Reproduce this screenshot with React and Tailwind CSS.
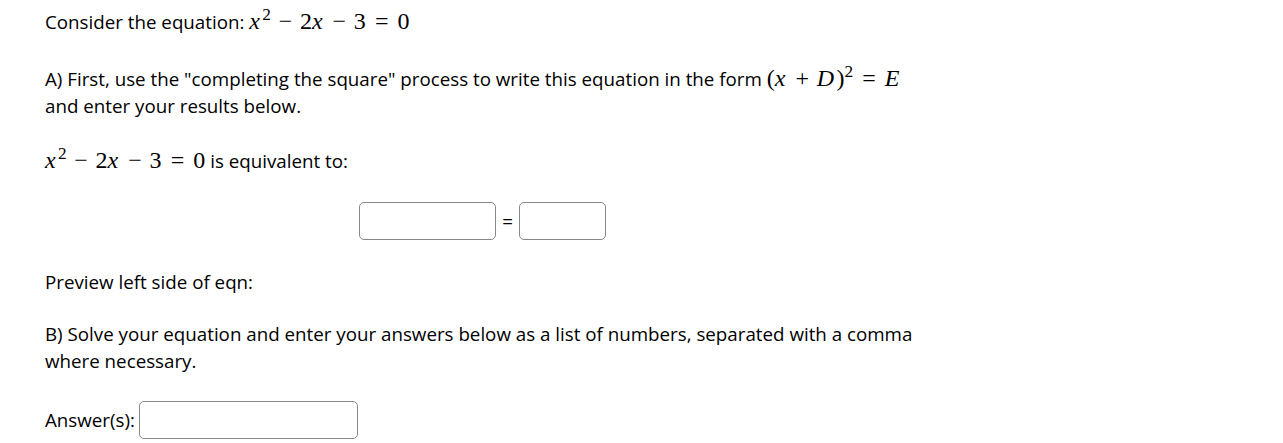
import React from "react";

function MI({ children, r = "0.1em" }) {
  return (
    <span className="italic" style={{ marginRight: r }}>
      {children}
    </span>
  );
}
function Bin({ children }) {
  return <span className="mx-[0.32em]">{children}</span>;
}
function Rel({ children }) {
  return <span className="mx-[0.38em]">{children}</span>;
}
function Sup({ children }) {
  return <span className="relative -top-[0.5em] text-[0.72em]">{children}</span>;
}

function Math({ children }) {
  return (
    <span className="whitespace-nowrap text-[24px] font-['Liberation_Serif',serif] leading-none">
      {children}
    </span>
  );
}

function Eqn() {
  return (
    <Math>
      <MI>x</MI>
      <Sup>2</Sup>
      <Bin>−</Bin>2<MI>x</MI>
      <Bin>−</Bin>3<Rel>=</Rel>0
    </Math>
  );
}

export default function App() {
  return (
    <div className="bg-white min-h-[443px] text-black font-['Open_Sans',sans-serif] text-[18.75px] leading-[27.5px]">
      <div className="pl-[45px] w-[920px] pt-[8px] flex flex-col">
        <p>
          Consider the equation: <Eqn />
        </p>
        <p className="mt-[29px]">
          A) First, use the "completing the square" process to write this equation in the form{" "}
          <Math>
            (<MI>x</MI>
            <Bin>+</Bin>
            <MI>D</MI>)<Sup>2</Sup>
            <Rel>=</Rel>
            <MI>E</MI>
          </Math>
          <br />
          and enter your results below.
        </p>
        <p className="mt-[27px]">
          <Eqn /> is equivalent to:
        </p>
        <div className="mt-[28px] flex items-center justify-center gap-[4px]">
          <input className="w-[137px] h-[38px] border border-[#888] rounded-[5px] bg-white" />
          <span className="mx-[2px]">=</span>
          <input className="w-[87px] h-[38px] border border-[#888] rounded-[5px] bg-white" />
        </div>
        <p className="mt-[28px]">Preview left side of eqn:</p>
        <p className="mt-[24px]">
          B) Solve your equation and enter your answers below as a list of numbers, separated with a comma
          <br />
          where necessary.
        </p>
        <div className="mt-[26px] flex items-center gap-[4px]">
          <span>Answer(s):</span>
          <input className="w-[219px] h-[38px] border border-[#888] rounded-[5px] bg-white" />
        </div>
      </div>
    </div>
  );
}
